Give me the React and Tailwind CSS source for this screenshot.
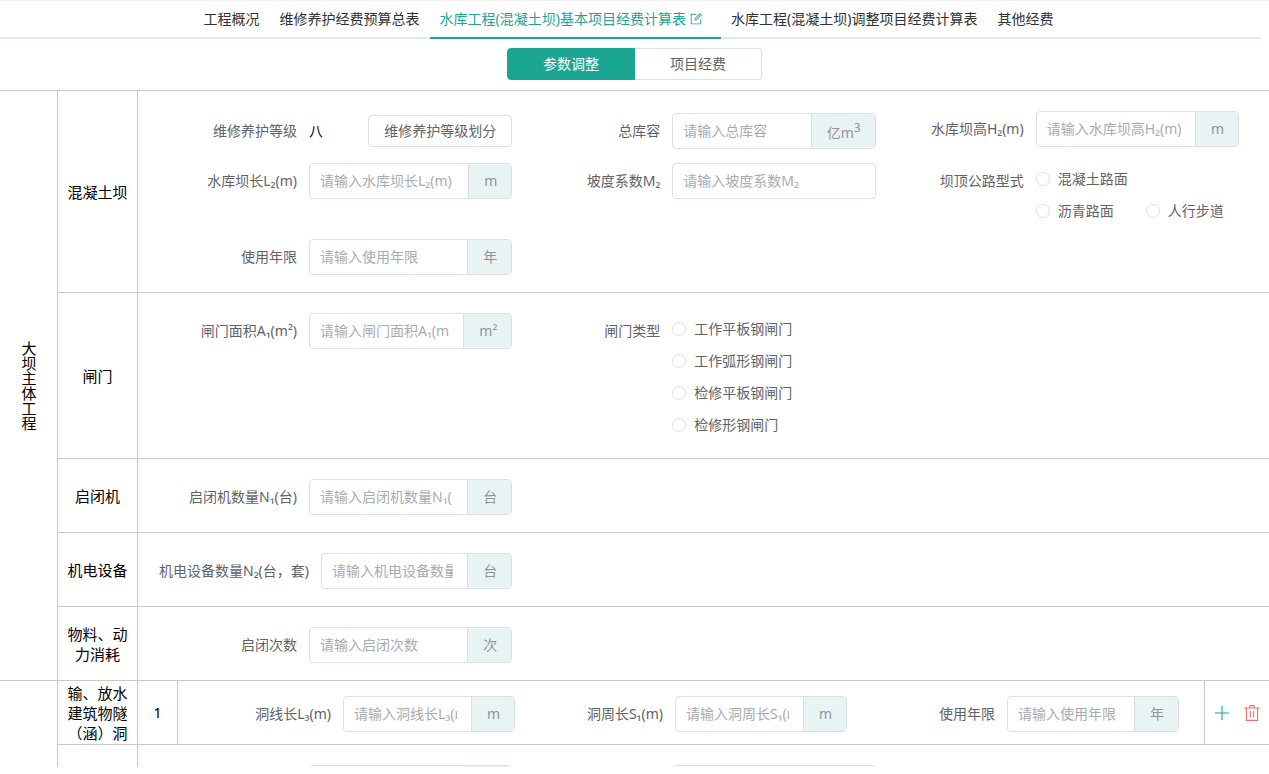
import { useId, useState } from 'react'

const tabs = [
  '工程概况',
  '维修养护经费预算总表',
  '水库工程(混凝土坝)基本项目经费计算表',
  '水库工程(混凝土坝)调整项目经费计算表',
  '其他经费',
]

function EditIcon() {
  return (
    <svg className="ml-[3px] mr-2 size-3.5" viewBox="0 0 1024 1024" fill="currentColor">
      <path d="M832 512a32 32 0 1 1 64 0v352a32 32 0 0 1-32 32H160a32 32 0 0 1-32-32V160a32 32 0 0 1 32-32h352a32 32 0 0 1 0 64H192v640h640V512z" />
      <path d="m469.952 554.24 52.8-7.552L847.104 222.4a32 32 0 1 0-45.248-45.248L477.44 501.44l-7.552 52.8zm422.4-422.4a96 96 0 0 1 0 135.808l-331.84 331.84a32 32 0 0 1-18.112 9.088L436.8 623.68a32 32 0 0 1-36.224-36.224l15.104-105.6a32 32 0 0 1 9.024-18.112l331.904-331.84a96 96 0 0 1 135.744 0z" />
    </svg>
  )
}

function PlusIcon() {
  return (
    <svg className="size-[18px]" viewBox="0 0 1024 1024" fill="currentColor">
      <path d="M480 480V128a32 32 0 0 1 64 0v352h352a32 32 0 1 1 0 64H544v352a32 32 0 1 1-64 0V544H128a32 32 0 0 1 0-64h352z" />
    </svg>
  )
}

function DeleteIcon() {
  return (
    <svg className="size-[18px]" viewBox="0 0 1024 1024" fill="currentColor">
      <path d="M160 256H96a32 32 0 0 1 0-64h256V95.936a32 32 0 0 1 32-32h256a32 32 0 0 1 32 32V192h256a32 32 0 1 1 0 64h-64v672a32 32 0 0 1-32 32H192a32 32 0 0 1-32-32V256zm448-64v-64H416v64h192zM224 896h576V256H224v640zm192-128a32 32 0 0 1-32-32V416a32 32 0 0 1 64 0v320a32 32 0 0 1-32 32zm192 0a32 32 0 0 1-32-32V416a32 32 0 0 1 64 0v320a32 32 0 0 1-32 32z" />
    </svg>
  )
}

const labelClass = 'min-w-[150px] shrink-0 pr-3 text-right leading-9 whitespace-nowrap'

// Text input with an optional unit on its right
function Field({ label, unit, className = '' }) {
  const id = useId()
  return (
    <div className={`flex min-w-0 pr-2.5 ${className}`}>
      <label htmlFor={id} className={labelClass}>{label}</label>
      <div className="flex h-9 min-w-0 flex-1 overflow-hidden rounded border border-[#dcdfe6] bg-white">
        <div className="min-w-0 flex-1 pl-2.5 pr-3.5">
          <input
            id={id}
            placeholder={label && `请输入${label}`}
            className="block h-8 w-full outline-none placeholder:text-[#a8abb2]"
          />
        </div>
        {unit && (
          <span className="flex items-center border-l border-[#dcdfe6] bg-[#e8f4f4] pr-3.5 pl-[15px] text-[#909399]">
            {unit}
          </span>
        )}
      </div>
    </div>
  )
}

function RadioField({ label, options }) {
  const name = useId()
  return (
    <div role="radiogroup" aria-labelledby={name} className="flex min-w-0 pr-2.5">
      <span id={name} className={labelClass}>{label}</span>
      <div className="flex min-w-0 flex-1 flex-wrap content-start">
        {options.map((option) => (
          <label key={option} className="mr-8 flex h-8 items-center gap-2 whitespace-nowrap last:mr-0">
            <input
              type="radio"
              name={name}
              className="size-3.5 appearance-none rounded-full border border-[#dcdfe6] bg-white checked:border-4 checked:border-[#1ba694]"
            />
            {option}
          </label>
        ))}
      </div>
    </div>
  )
}

function Row({ title, children }) {
  return (
    <div className="flex border-b border-[#c8c8c8]">
      <div className="flex w-20 shrink-0 items-center justify-center border-r border-[#c8c8c8] px-2 text-center text-[15px] leading-5 text-black">
        {title}
      </div>
      <div className="grid min-w-0 flex-1 grid-cols-3 gap-y-3 pt-5 pr-5 pb-[17px] pl-[21px]">
        {children}
      </div>
    </div>
  )
}

function App() {
  const [activeTab, setActiveTab] = useState(2)
  const [view, setView] = useState('params')

  return (
    <div className="h-[calc(100vh-7px)] overflow-hidden border-t border-[#f0f0f0] bg-white font-['Noto_Sans','Noto_Sans_CJK_SC',sans-serif] text-sm text-[#606266]">
      {/* Tabs */}
      <nav className="mr-2 flex justify-center border-b-2 border-[#e4e7ed] pr-1">
        {tabs.map((tab, index) => (
          <button
            key={tab}
            onClick={() => setActiveTab(index)}
            className={`-mb-0.5 flex h-[38px] items-center border-b-2 px-2.5 whitespace-nowrap ${
              index === activeTab ? 'border-[#1ba694] text-[#1ba694]' : 'border-transparent text-[#303133]'
            }`}
          >
            {tab}
            {index === activeTab && <EditIcon />}
          </button>
        ))}
      </nav>

      {/* View switch */}
      <div className="flex justify-center border-b border-[#c8c8c8] pt-[9px] pb-2.5">
        <button
          onClick={() => setView('params')}
          className={`h-8 w-32 rounded-l border ${view === 'params' ? 'border-[#1ba694] bg-[#1ba694] text-white' : 'border-[#dcdfe6]'}`}
        >
          参数调整
        </button>
        <button
          onClick={() => setView('cost')}
          className={`h-8 w-[127px] rounded-r border border-l-0 ${view === 'cost' ? 'border-[#1ba694] bg-[#1ba694] text-white' : 'border-[#dcdfe6]'}`}
        >
          项目经费
        </button>
      </div>

      {/* Dam body */}
      <section className="flex">
        <div className="flex w-[58px] shrink-0 items-center justify-center border-r border-b border-[#c8c8c8]">
          <h2 className="text-[15px] leading-5 text-black [writing-mode:vertical-rl]">大坝主体工程</h2>
        </div>
        <div className="min-w-0 flex-1">
          <Row title="混凝土坝">
            <div className="flex h-10 items-center pr-2.5">
              <span className={labelClass}>维修养护等级</span>
              <div className="flex flex-1 items-center justify-between">
                <span className="text-black">八</span>
                <button className="h-8 rounded border border-[#dcdfe6] px-[15px]">维修养护等级划分</button>
              </div>
            </div>
            <Field
              label="总库容"
              unit={<span className="pt-1">亿m<sup className="text-xs">3</sup></span>}
              className="items-center"
            />
            <Field label="水库坝高H₂(m)" unit="m" />
            <Field label="水库坝长L₂(m)" unit="m" />
            <Field label="坡度系数M₂" />
            <RadioField label="坝顶公路型式" options={['混凝土路面', '沥青路面', '人行步道']} />
            <Field label="使用年限" unit="年" />
          </Row>
          <Row title="闸门">
            <Field label="闸门面积A₁(m²)" unit="m²" />
            <RadioField label="闸门类型" options={['工作平板钢闸门', '工作弧形钢闸门', '检修平板钢闸门', '检修形钢闸门']} />
          </Row>
          <Row title="启闭机">
            <Field label="启闭机数量N₁(台)" unit="台" />
          </Row>
          <Row title="机电设备">
            <Field label="机电设备数量N₂(台，套)" unit="台" />
          </Row>
          <Row title="物料、动力消耗">
            <Field label="启闭次数" unit="次" />
          </Row>
        </div>
      </section>

      {/* Outlet works */}
      <section className="flex">
        <div className="w-[58px] shrink-0 border-r border-[#c8c8c8]" />
        <div className="min-w-0 flex-1">
          <div className="flex border-b border-[#c8c8c8]">
            <div className="flex w-20 shrink-0 items-center justify-center border-r border-[#c8c8c8] px-2 text-center text-[15px] leading-5 text-black">
              输、放水建筑物隧（涵）洞
            </div>
            <div className="flex w-10 shrink-0 items-center justify-center border-r border-[#c8c8c8] text-[15px] text-black">
              1
            </div>
            <div className="grid min-w-0 flex-1 grid-cols-3 px-[15px] pt-[15px] pb-3">
              <Field label="洞线长L₃(m)" unit="m" />
              <Field label="洞周长S₁(m)" unit="m" />
              <Field label="使用年限" unit="年" />
            </div>
            <div className="flex w-[65px] shrink-0 items-center justify-center gap-3 border-l border-[#c8c8c8]">
              <button aria-label="添加" className="text-[#1ba694]"><PlusIcon /></button>
              <button aria-label="删除" className="text-[#f56c6c]"><DeleteIcon /></button>
            </div>
          </div>
          <Row title="">
            <Field label="" unit={<span className="w-4" />} />
            <Field label="" />
          </Row>
        </div>
      </section>
    </div>
  )
}

export default App
